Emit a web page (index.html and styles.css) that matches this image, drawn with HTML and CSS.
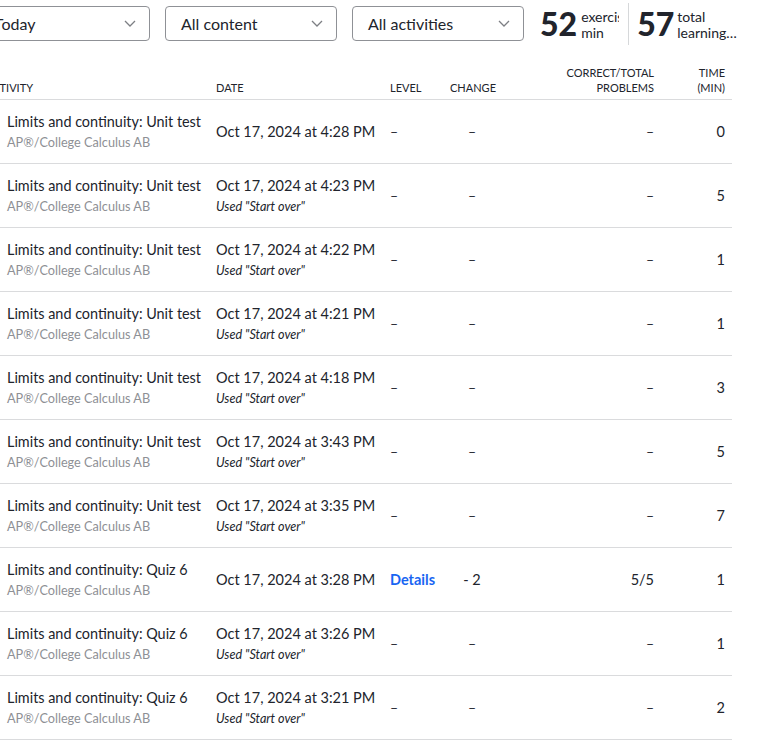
FILE: index.html
```html
<!DOCTYPE html>
<html>
<head>
<meta charset="utf-8">
<link rel="stylesheet" href="styles.css">
</head>
<body>
<div class="page">
  <div class="toolbar">
    <div class="select"><span>Today</span><svg class="chev" width="12" height="7" viewBox="0 0 12 7"><path d="M1 1l5 5 5-5" fill="none" stroke="#7d7f84" stroke-width="1.3"/></svg></div>
    <div class="select"><span>All content</span><svg class="chev" width="12" height="7" viewBox="0 0 12 7"><path d="M1 1l5 5 5-5" fill="none" stroke="#7d7f84" stroke-width="1.3"/></svg></div>
    <div class="select"><span>All activities</span><svg class="chev" width="12" height="7" viewBox="0 0 12 7"><path d="M1 1l5 5 5-5" fill="none" stroke="#7d7f84" stroke-width="1.3"/></svg></div>
    <div class="stats">
      <div class="stat first"><span class="num">52</span><span class="label clip">exercise min</span></div>
      <div class="stat"><span class="num">57</span><span class="label clamp">total learning min</span></div>
    </div>
  </div>
  <table class="log">
    <colgroup>
      <col class="c-act"><col class="c-date"><col class="c-level"><col class="c-change"><col class="c-correct"><col class="c-time">
    </colgroup>
    <thead>
      <tr>
        <th class="act">ACTIVITY</th>
        <th>DATE</th>
        <th>LEVEL</th>
        <th class="center">CHANGE</th>
        <th class="right">CORRECT/TOTAL<br>PROBLEMS</th>
        <th class="right last">TIME<br>(MIN)</th>
      </tr>
    </thead>
    <tbody>
      <tr>
        <td class="act"><div class="title">Limits and continuity: Unit test</div><div class="sub">AP®/College Calculus AB</div></td>
        <td><div class="date">Oct 17, 2024 at 4:28 PM</div></td>
        <td><span class="dash">–</span></td>
        <td class="center"><span class="dash">–</span></td>
        <td class="right"><span class="dash">–</span></td>
        <td class="right last">0</td>
      </tr>
      <tr>
        <td class="act"><div class="title">Limits and continuity: Unit test</div><div class="sub">AP®/College Calculus AB</div></td>
        <td><div class="date">Oct 17, 2024 at 4:23 PM</div><div class="note">Used "Start over"</div></td>
        <td><span class="dash">–</span></td>
        <td class="center"><span class="dash">–</span></td>
        <td class="right"><span class="dash">–</span></td>
        <td class="right last">5</td>
      </tr>
      <tr>
        <td class="act"><div class="title">Limits and continuity: Unit test</div><div class="sub">AP®/College Calculus AB</div></td>
        <td><div class="date">Oct 17, 2024 at 4:22 PM</div><div class="note">Used "Start over"</div></td>
        <td><span class="dash">–</span></td>
        <td class="center"><span class="dash">–</span></td>
        <td class="right"><span class="dash">–</span></td>
        <td class="right last">1</td>
      </tr>
      <tr>
        <td class="act"><div class="title">Limits and continuity: Unit test</div><div class="sub">AP®/College Calculus AB</div></td>
        <td><div class="date">Oct 17, 2024 at 4:21 PM</div><div class="note">Used "Start over"</div></td>
        <td><span class="dash">–</span></td>
        <td class="center"><span class="dash">–</span></td>
        <td class="right"><span class="dash">–</span></td>
        <td class="right last">1</td>
      </tr>
      <tr>
        <td class="act"><div class="title">Limits and continuity: Unit test</div><div class="sub">AP®/College Calculus AB</div></td>
        <td><div class="date">Oct 17, 2024 at 4:18 PM</div><div class="note">Used "Start over"</div></td>
        <td><span class="dash">–</span></td>
        <td class="center"><span class="dash">–</span></td>
        <td class="right"><span class="dash">–</span></td>
        <td class="right last">3</td>
      </tr>
      <tr>
        <td class="act"><div class="title">Limits and continuity: Unit test</div><div class="sub">AP®/College Calculus AB</div></td>
        <td><div class="date">Oct 17, 2024 at 3:43 PM</div><div class="note">Used "Start over"</div></td>
        <td><span class="dash">–</span></td>
        <td class="center"><span class="dash">–</span></td>
        <td class="right"><span class="dash">–</span></td>
        <td class="right last">5</td>
      </tr>
      <tr>
        <td class="act"><div class="title">Limits and continuity: Unit test</div><div class="sub">AP®/College Calculus AB</div></td>
        <td><div class="date">Oct 17, 2024 at 3:35 PM</div><div class="note">Used "Start over"</div></td>
        <td><span class="dash">–</span></td>
        <td class="center"><span class="dash">–</span></td>
        <td class="right"><span class="dash">–</span></td>
        <td class="right last">7</td>
      </tr>
      <tr>
        <td class="act"><div class="title">Limits and continuity: Quiz 6</div><div class="sub">AP®/College Calculus AB</div></td>
        <td><div class="date">Oct 17, 2024 at 3:28 PM</div></td>
        <td><a class="details" href="#">Details</a></td>
        <td class="center">- 2</td>
        <td class="right">5/5</td>
        <td class="right last">1</td>
      </tr>
      <tr>
        <td class="act"><div class="title">Limits and continuity: Quiz 6</div><div class="sub">AP®/College Calculus AB</div></td>
        <td><div class="date">Oct 17, 2024 at 3:26 PM</div><div class="note">Used "Start over"</div></td>
        <td><span class="dash">–</span></td>
        <td class="center"><span class="dash">–</span></td>
        <td class="right"><span class="dash">–</span></td>
        <td class="right last">1</td>
      </tr>
      <tr>
        <td class="act"><div class="title">Limits and continuity: Quiz 6</div><div class="sub">AP®/College Calculus AB</div></td>
        <td><div class="date">Oct 17, 2024 at 3:21 PM</div><div class="note">Used "Start over"</div></td>
        <td><span class="dash">–</span></td>
        <td class="center"><span class="dash">–</span></td>
        <td class="right"><span class="dash">–</span></td>
        <td class="right last">2</td>
      </tr>
    </tbody>
  </table>
</div>
</body>
</html>
```

FILE: styles.css
```css
html, body {
  margin: 0;
  padding: 0;
  background: #fff;
}
body {
  font-family: Lato, "Noto Sans", sans-serif;
  color: #21242c;
  overflow: hidden;
}
.page {
  margin-left: -22px;
  width: 800px;
}
.toolbar {
  display: flex;
  align-items: flex-start;
  gap: 15px;
  padding-top: 6px;
}
.select {
  box-sizing: border-box;
  width: 172px;
  height: 35px;
  border: 1px solid #8f9196;
  border-radius: 4px;
  display: flex;
  align-items: center;
  justify-content: space-between;
  padding: 0 13px 1px 15px;
  font-size: 16px;
}
.chev {
  display: block;
  margin-top: 1px;
}
.stats {
  display: flex;
  margin-left: 1px;
  margin-top: -3px;
}
.stat {
  display: flex;
  align-items: center;
  height: 42px;
}
.stat.first {
  border-right: 1px solid #d6d8da;
  padding-right: 9px;
  margin-right: 8px;
}
.num {
  font-size: 32px;
  font-weight: 900;
  line-height: 32px;
  margin-right: 4px;
}
.label {
  font-size: 14px;
  line-height: 16px;
  margin-top: 2px;
}
.label.clip {
  width: 38px;
  height: 32px;
  overflow: hidden;
}
.label.clamp {
  width: 62px;
  margin-left: -1px;
  display: -webkit-box;
  -webkit-line-clamp: 2;
  -webkit-box-orient: vertical;
  overflow: hidden;
}
.log {
  margin-top: 20px;
  width: 754px;
  table-layout: fixed;
  border-collapse: separate;
  border-spacing: 0;
}
.c-act { width: 230px; }
.c-date { width: 174px; }
.c-level { width: 60px; }
.c-change { width: 60px; }
.c-correct { width: 160px; }
.c-time { width: 70px; }
th {
  font-size: 11px;
  font-weight: 400;
  line-height: 15px;
  text-align: left;
  vertical-align: bottom;
  padding: 0 8px 4px 8px;
  border-bottom: 1px solid #dadbdd;
  white-space: nowrap;
}
th.act {
  padding-left: 7px;
}
td {
  box-sizing: border-box;
  height: 64px;
  padding: 0 8px;
  border-bottom: 1px solid #dadbdd;
  vertical-align: middle;
  font-size: 14.5px;
  white-space: nowrap;
}
td.act {
  padding-left: 29px;
}
.center { text-align: center; }
.right { text-align: right; }
.last { padding-right: 7px; }
.title {
  font-size: 14.4px;
  line-height: 21px;
}
.sub {
  font-size: 12.7px;
  line-height: 21px;
  color: #8e9095;
}
.date {
  font-size: 14.5px;
  line-height: 22px;
}
.note {
  font-size: 12.6px;
  line-height: 20px;
  font-style: italic;
}
.dash {
  font-size: 14px;
}
.details {
  color: #1865f2;
  font-weight: 700;
  text-decoration: none;
  font-size: 14.5px;
}
```
